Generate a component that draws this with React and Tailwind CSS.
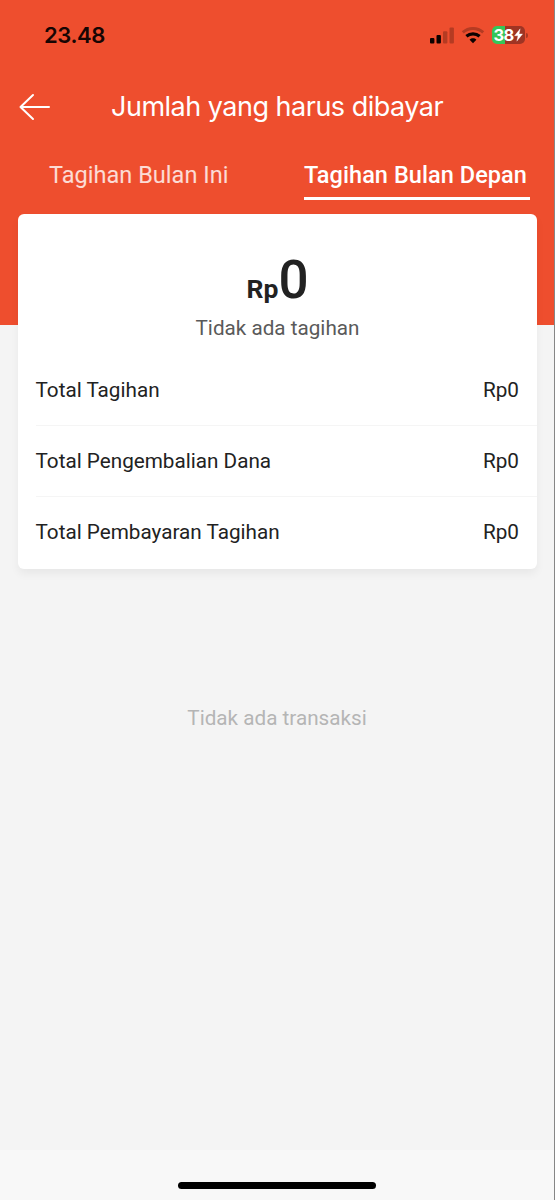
import { useState } from "react";

const tabs = ["Tagihan Bulan Ini", "Tagihan Bulan Depan"];

const rows = [
  { label: "Total Tagihan", value: "Rp0" },
  { label: "Total Pengembalian Dana", value: "Rp0" },
  { label: "Total Pembayaran Tagihan", value: "Rp0" },
];

function StatusBar() {
  return (
    <div className="flex h-[70px] items-center justify-between pl-[44px] pr-[26px]">
      <span className="font-['Inter',sans-serif] text-[22px] font-semibold tracking-[-0.4px] text-[#160503]">
        23.48
      </span>
      <div className="flex items-center">
        {/* Signal */}
        <svg width="25" height="17" viewBox="0 0 25 17" fill="#0c0200">
          <rect x="0" y="11" width="4.4" height="5.5" rx="1" />
          <rect x="6.5" y="8" width="4.4" height="8.5" rx="1" />
          <rect x="13" y="4.2" width="4.4" height="12.3" rx="1" opacity="0.25" />
          <rect x="19.5" y="0.5" width="4.4" height="16" rx="1" opacity="0.25" />
        </svg>
        {/* Wifi */}
        <svg className="ml-[6px]" width="24" height="18" viewBox="0 0 24 18" fill="none" stroke="#0c0200">
          <path d="M1.8 6.3C7.6 1.1 16.4 1.1 22.2 6.3" strokeWidth="3" opacity="0.25" />
          <path d="M5.4 10.3C9.2 7 14.8 7 18.6 10.3" strokeWidth="3.2" />
          <path d="M8.6 13.7C10.5 11.9 13.5 11.9 15.4 13.7L12 17.2Z" fill="#0c0200" stroke="none" />
        </svg>
        {/* Battery */}
        <div className="ml-[7px] flex h-[18px] w-[33px] items-center justify-center rounded-[5px] bg-linear-to-r from-[#34c759] from-38% to-[#9f3423] to-38%">
          <span className="font-['Inter',sans-serif] text-[16.5px] leading-none font-bold tracking-[-0.8px] text-white">38</span>
          <svg className="ml-px" width="9" height="14" viewBox="0 0 9 13" fill="#fff" stroke="#fff" strokeWidth="0.3">
            <path d="M6.2 0.3L0.5 7.3H4L2.8 12.7L8.6 5.4H5.1Z" />
          </svg>
        </div>
        <div className="ml-px h-[5px] w-[2px] rounded-r-full bg-[#a93722]"></div>
      </div>
    </div>
  );
}

export default function App() {
  const [activeTab, setActiveTab] = useState(1);

  return (
    <div className="flex h-[1200px] w-[555px] border-r border-black/45 bg-[#f4f4f4] font-['Roboto',sans-serif]">
      <div className="flex flex-1 flex-col">
        {/* Header */}
        <header className="h-[325px] shrink-0 bg-[#ee4e2e]">
          <StatusBar />

          <div className="flex h-[74px] items-center">
            <button type="button" aria-label="Kembali" className="ml-[19px]">
              <svg width="32" height="28" viewBox="0 0 32 28" fill="none" stroke="#fff" strokeWidth="2" strokeLinecap="round" strokeLinejoin="round">
                <path d="M30 14H1.5M14 2L1.5 14L14 26" />
              </svg>
            </button>
            <h1 className="ml-[60px] pt-px font-['Inter',sans-serif] text-[27px] whitespace-nowrap tracking-[-0.5px] text-white">
              Jumlah yang harus dibayar
            </h1>
          </div>

          <div className="flex h-[56px] justify-between pl-[49px] pr-[24px]">
            {tabs.map((tab, i) => (
              <button
                key={tab}
                type="button"
                onClick={() => setActiveTab(i)}
                className={
                  i === activeTab
                    ? "w-[226px] border-b-[3px] border-white pt-[10px] text-left text-[23.5px] font-medium tracking-[0.06px] whitespace-nowrap text-white"
                    : "border-b-[3px] border-transparent pt-[10px] text-left text-[23.5px] tracking-[0.03px] whitespace-nowrap text-white/80"
                }
              >
                {tab}
              </button>
            ))}
          </div>
        </header>

        {/* Bill summary */}
        <section className="relative mr-[17px] -mt-[111px] ml-[18px] h-[355px] shrink-0 rounded-[6px] bg-white pt-[37px] shadow-[0_5px_8px_rgba(0,0,0,0.05)]">
          <div className="flex h-[59px] items-baseline justify-center text-[#222]">
            <span className="text-[26.5px] font-bold">Rp</span>
            <span className="text-[53px] leading-[58px] font-medium">0</span>
          </div>
          <p className="text-center text-[20.7px] leading-[36px] text-[#5a5a5a]">Tidak ada tagihan</p>

          <div className="mt-[9px] pl-[17.5px]">
            {rows.map((row) => (
              <div
                key={row.label}
                className="flex h-[71.2px] items-center justify-between border-b border-[#f5f5f5] pr-[18px] text-[20.7px] text-[#222] last:border-0"
              >
                <span>{row.label}</span>
                <span>{row.value}</span>
              </div>
            ))}
          </div>
        </section>

        <p className="mt-[134px] text-center text-[20.7px] leading-[30px] text-[#b5b5b5]">Tidak ada transaksi</p>

        {/* Home indicator */}
        <footer className="mt-auto flex h-[50px] items-end justify-center bg-[#f8f8f8] pb-[11.5px]">
          <div className="h-[7px] w-[198px] rounded-full bg-black"></div>
        </footer>
      </div>
    </div>
  );
}
